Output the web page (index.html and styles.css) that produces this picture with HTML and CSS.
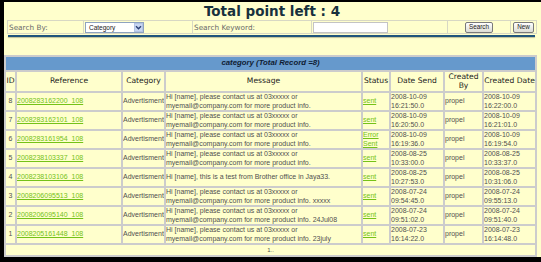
FILE: index.html
```html
<!DOCTYPE html>
<html lang="en">
<head>
    <meta charset="UTF-8">
    <title>SMS Log</title>
    <link rel="stylesheet" href="styles.css">
</head>
<body>

    <div class="page">

        <!-- Cabecalho com pontos e busca -->
        <div class="top">
            <h1 class="title">Total point left : 4</h1>
            <table class="search">
                <tr>
                    <td class="c-by">Search By:</td>
                    <td class="c-select">
                        <span class="select">
                            <span class="select-text">Category</span>
                            <span class="select-arrow">
                                <svg width="7" height="7" viewBox="0 0 7 7"><path d="M1 2.2 L3.5 4.7 L6 2.2" fill="none" stroke="#2b3f73" stroke-width="1.4"/></svg>
                            </span>
                        </span>
                    </td>
                    <td class="c-kw">Search Keyword:</td>
                    <td class="c-input"><input type="text" class="keyword"></td>
                    <td class="c-btn"><button class="btn">Search</button></td>
                    <td class="c-btn2"><button class="btn">New</button></td>
                </tr>
            </table>
            <div class="rule"></div>
        </div>

        <!-- Lista de mensagens -->
        <table class="list">
            <colgroup>
                <col class="w-id"><col class="w-ref"><col class="w-cat"><col class="w-msg">
                <col class="w-status"><col class="w-date"><col class="w-by"><col class="w-date2">
            </colgroup>
            <tr><td colspan="8" class="caption">category (Total Record =8)</td></tr>
            <tr class="head">
                <th>ID</th><th>Reference</th><th>Category</th><th>Message</th>
                <th>Status</th><th>Date Send</th><th>Created By</th><th>Created Date</th>
            </tr>
            <tr>
                <td class="id">8</td><td><a href="#">2008283162200_108</a></td><td>Advertisment</td>
                <td>Hi [name], please contact us at 03xxxxx or<br>myemail@company.com for more product info.</td>
                <td><a href="#">sent</a></td><td>2008-10-09 16:21:50.0</td><td>propel</td><td>2008-10-09 16:22:00.0</td>
            </tr>
            <tr>
                <td class="id">7</td><td><a href="#">2008283162101_108</a></td><td>Advertisment</td>
                <td>Hi [name], please contact us at 03xxxxx or<br>myemail@company.com for more product info.</td>
                <td><a href="#">sent</a></td><td>2008-10-09 16:20:50.0</td><td>propel</td><td>2008-10-09 16:21:01.0</td>
            </tr>
            <tr>
                <td class="id">6</td><td><a href="#">2008283161954_108</a></td><td>Advertisment</td>
                <td>Hi [name], please contact us at 03xxxxx or<br>myemail@company.com for more product info.</td>
                <td><a href="#">Error Sent</a></td><td>2008-10-09 16:19:36.0</td><td>propel</td><td>2008-10-09 16:19:54.0</td>
            </tr>
            <tr>
                <td class="id">5</td><td><a href="#">2008238103337_108</a></td><td>Advertisment</td>
                <td>Hi [name], please contact us at 03xxxxx or<br>myemail@company.com for more product info.</td>
                <td><a href="#">sent</a></td><td>2008-08-25 10:33:00.0</td><td>propel</td><td>2008-08-25 10:33:37.0</td>
            </tr>
            <tr>
                <td class="id">4</td><td><a href="#">2008238103106_108</a></td><td>Advertisment</td>
                <td>Hi [name], this is a test from Brother office in Jaya33.</td>
                <td><a href="#">sent</a></td><td>2008-08-25 10:27:53.0</td><td>propel</td><td>2008-08-25 10:31:06.0</td>
            </tr>
            <tr>
                <td class="id">3</td><td><a href="#">2008206095513_108</a></td><td>Advertisment</td>
                <td>Hi [name], please contact us at 03xxxxx or<br>myemail@company.com for more product info. xxxxx</td>
                <td><a href="#">sent</a></td><td>2008-07-24 09:54:45.0</td><td>propel</td><td>2008-07-24 09:55:13.0</td>
            </tr>
            <tr>
                <td class="id">2</td><td><a href="#">2008206095140_108</a></td><td>Advertisment</td>
                <td>Hi [name], please contact us at 03xxxxx or<br>myemail@company.com for more product info. 24Jul08</td>
                <td><a href="#">sent</a></td><td>2008-07-24 09:51:02.0</td><td>propel</td><td>2008-07-24 09:51:40.0</td>
            </tr>
            <tr>
                <td class="id">1</td><td><a href="#">2008205161448_108</a></td><td>Advertisment</td>
                <td>Hi [name], please contact us at 03xxxxx or<br>myemail@company.com for more product info. 23july</td>
                <td><a href="#">sent</a></td><td>2008-07-23 16:14:22.0</td><td>propel</td><td>2008-07-23 16:14:48.0</td>
            </tr>
            <tr><td colspan="8" class="pager">1..</td></tr>
        </table>

    </div>

</body>
</html>
```

FILE: styles.css
```css
body {
    margin: 0;
    background: #000;
    font-family: "Liberation Sans", Arial, sans-serif;
}

.page {
    margin: 2px 0 0 4px;
    height: 255px;
    padding-top: 1px;
    box-sizing: border-box;
    background: #ffffcc;
}

.top {
    margin-left: 3px;
    width: 530px;
}

.title {
    margin: 0;
    height: 17px;
    line-height: 17px;
    text-align: center;
    font-family: "DejaVu Sans", sans-serif;
    font-size: 13.5px;
    font-weight: bold;
    color: #17313d;
}

.search {
    width: 530px;
    height: 14px;
    border-collapse: collapse;
    table-layout: fixed;
}

.search td {
    border: 1px solid #d8d8c4;
    padding: 0 1px;
    height: 12px;
    font-family: "DejaVu Sans", sans-serif;
    font-size: 7.3px;
    color: #6a6a6a;
    vertical-align: middle;
}

.c-by { width: 73px; }
.c-select { width: 106px; }
.c-kw { width: 116px; }
.c-input { width: 133px; }
.c-btn { width: 60px; text-align: center; }
.c-btn2 { text-align: center; }

.select {
    display: flex;
    width: 59px;
    height: 11px;
    box-sizing: border-box;
    border: 1px solid #8ea3c0;
    background: #fff;
}

.select-text {
    flex: 1;
    padding-left: 3px;
    font-family: "Liberation Sans", Arial, sans-serif;
    font-size: 6.5px;
    line-height: 9px;
    color: #222;
}

.select-arrow {
    display: flex;
    align-items: center;
    justify-content: center;
    width: 9px;
    background: #c8d6f2;
    border: 1px solid #b4c4e4;
    box-sizing: border-box;
}

.keyword {
    display: block;
    width: 75px;
    height: 11px;
    box-sizing: border-box;
    margin: 0;
    padding: 0;
    border: 1px solid #c4c4c4;
    background: #fff;
}

.btn {
    height: 11px;
    padding: 0 3px;
    margin: 0;
    border: 1px solid #7a7a7a;
    border-radius: 2px;
    background: linear-gradient(#ffffff, #dcdcd4);
    font-family: "Liberation Sans", Arial, sans-serif;
    font-size: 6.3px;
    line-height: 8px;
    color: #222;
}

.rule {
    margin: 1px 0 0 1px;
    width: 527px;
    border-top: 2px solid #20557c;
    box-shadow: 0 1px 1px rgba(0, 0, 0, 0.25);
}

.list {
    margin-top: 18px;
    width: 533px;
    border-spacing: 2px;
    table-layout: fixed;
    background: #cccccc;
}

.w-id { width: 9px; }
.w-ref { width: 104px; }
.w-cat { width: 41px; }
.w-msg { width: 195px; }
.w-status { width: 26px; }
.w-date { width: 52px; }
.w-by { width: 37px; }
.w-date2 { width: 51px; }

.list td,
.list th {
    padding: 0;
    background: #ffffcc;
    vertical-align: middle;
}

.list td {
    height: 17px;
    font-size: 7px;
    line-height: 8.4px;
    color: #505050;
    overflow: hidden;
}

.list .caption {
    height: 13px;
    background: #6699cc;
    text-align: center;
    font-size: 7.8px;
    font-weight: bold;
    font-style: italic;
    color: #0f1c33;
}

.list th {
    height: 19px;
    font-family: "DejaVu Sans", sans-serif;
    font-size: 7.6px;
    font-weight: normal;
    line-height: 8.5px;
    color: #1c1c1c;
}

.list .id {
    text-align: center;
}

.list a {
    color: #74c217;
}

.list .pager {
    height: 10px;
    text-align: center;
    font-size: 6px;
    line-height: 8px;
}
```
